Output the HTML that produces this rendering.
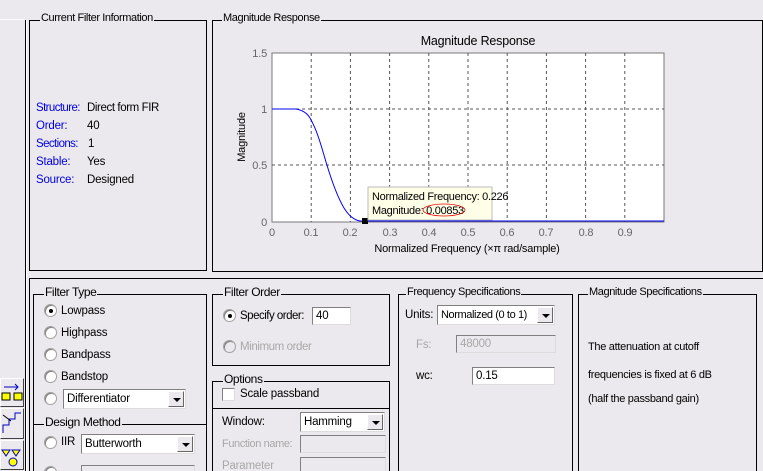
<!DOCTYPE html>
<html><head><meta charset="utf-8"><style>
*{margin:0;padding:0;box-sizing:border-box}
html,body{width:763px;height:471px;overflow:hidden}
body{background:#ebe9ed;font-family:"Liberation Sans",sans-serif;font-size:11px;color:#000;position:relative;letter-spacing:-0.2px}
.a{position:absolute}
.g{position:absolute;border:1px solid #000}
.t{position:absolute;background:#ebe9ed;padding:0 1px;font-size:11px;line-height:12px;white-space:nowrap;letter-spacing:-0.4px}
.rad{position:absolute;width:13px;height:13px;border-radius:50%;background:#fff;border:1px solid #a0a0a0;box-shadow:inset 1px 1px 0 #808080}
.rad.on::after{content:"";position:absolute;left:4px;top:4px;width:4px;height:4px;border-radius:50%;background:#000}
.rad.dis{background:#ebe9ed}
.lbl{position:absolute;font-size:11.5px;line-height:14px;white-space:nowrap}
.box{position:absolute;background:#fff;border:1px solid #808080;border-right-color:#ddd;border-bottom-color:#ddd;font-size:11.5px;line-height:16px;padding-left:3px;white-space:nowrap;overflow:hidden}
.dis{color:#a8a8a8}
.box.d{background:#ebe9ed}
.dd{position:absolute;right:1px;top:1px;bottom:1px;width:16px;background:#ebe9ed;border:1px solid #fff;border-right-color:#666;border-bottom-color:#666}
.dd::after{content:"";position:absolute;left:4px;top:6px;border-left:4px solid transparent;border-right:4px solid transparent;border-top:4px solid #000}
.blue{color:#0000e0}
.btn{position:absolute;left:0;width:24px;background:#ebe9ed;border:1px solid #fff;border-right-color:#404040;border-bottom-color:#404040}
</style></head><body>
<div class="a" style="left:0;top:19px;width:25px;height:1px;background:#fff"></div>
<div class="a" style="left:25px;top:20px;width:1px;height:451px;background:#000"></div>
<div class="a" style="left:26px;top:20px;width:1px;height:451px;background:#fff"></div>

<!-- Current filter info -->
<div class="g" style="left:29px;top:20px;width:178px;height:251px"></div>
<div class="t" style="left:40px;top:12px">Current Filter Information</div>
<div class="lbl blue" style="left:36px;top:101px;letter-spacing:-0.6px">Structure:</div><div class="lbl" style="left:87px;top:101px;letter-spacing:-0.4px">Direct form FIR</div>
<div class="lbl blue" style="left:36px;top:119px">Order:</div><div class="lbl" style="left:87px;top:119px">40</div>
<div class="lbl blue" style="left:36px;top:137px;letter-spacing:-0.6px">Sections:</div><div class="lbl" style="left:88px;top:137px">1</div>
<div class="lbl blue" style="left:36px;top:155px">Stable:</div><div class="lbl" style="left:87px;top:155px">Yes</div>
<div class="lbl blue" style="left:36px;top:173px">Source:</div><div class="lbl" style="left:87px;top:173px">Designed</div>

<!-- Magnitude response -->
<div class="g" style="left:212px;top:20px;width:551px;height:252px"></div>
<div class="t" style="left:222px;top:12px">Magnitude Response</div>
<svg class="a" style="left:213px;top:21px" width="549" height="250" viewBox="213 21 549 250">
<text x="478" y="45" font-family="Liberation Sans" font-size="12.5" text-anchor="middle">Magnitude Response</text>
<rect x="272" y="53" width="392" height="169" fill="#fff" stroke="#777"/>
<g stroke="#555" stroke-dasharray="3,3">
<line x1="311.2" y1="53" x2="311.2" y2="222"/><line x1="350.4" y1="53" x2="350.4" y2="222"/><line x1="389.6" y1="53" x2="389.6" y2="222"/><line x1="428.8" y1="53" x2="428.8" y2="222"/><line x1="468" y1="53" x2="468" y2="222"/><line x1="507.2" y1="53" x2="507.2" y2="222"/><line x1="546.4" y1="53" x2="546.4" y2="222"/><line x1="585.6" y1="53" x2="585.6" y2="222"/><line x1="624.8" y1="53" x2="624.8" y2="222"/>
<line x1="272" y1="109" x2="664" y2="109"/><line x1="272" y1="165" x2="664" y2="165"/>
</g>
<g font-family="Liberation Sans" font-size="11" fill="#666">
<text x="267" y="57" text-anchor="end">1.5</text><text x="267" y="113" text-anchor="end">1</text><text x="267" y="169" text-anchor="end">0.5</text><text x="267" y="226" text-anchor="end">0</text>
<text x="272" y="236" text-anchor="middle">0</text><text x="311" y="236" text-anchor="middle">0.1</text><text x="350" y="236" text-anchor="middle">0.2</text><text x="390" y="236" text-anchor="middle">0.3</text><text x="429" y="236" text-anchor="middle">0.4</text><text x="468" y="236" text-anchor="middle">0.5</text><text x="507" y="236" text-anchor="middle">0.6</text><text x="546" y="236" text-anchor="middle">0.7</text><text x="586" y="236" text-anchor="middle">0.8</text><text x="625" y="236" text-anchor="middle">0.9</text>
</g>
<text x="467" y="252" font-family="Liberation Sans" font-size="11" text-anchor="middle" letter-spacing="-0.2">Normalized Frequency  (×π rad/sample)</text>
<text transform="translate(245,137) rotate(-90)" font-family="Liberation Sans" font-size="11" text-anchor="middle">Magnitude</text>
<path d="M272 109 L296 109 C302 110 307 113 310 118 C317 130 321 145 326 162 C332 182 338 198 344 208 C349 216 354 220 360 221 L664 221" fill="none" stroke="#0000ff" stroke-width="1"/>
<rect x="362" y="218" width="6" height="6" fill="#000"/>
<rect x="368" y="187" width="124" height="33" fill="#ffffe8" stroke="#bbb"/>
<text x="372" y="200" font-family="Liberation Sans" font-size="11" letter-spacing="-0.3">Normalized Frequency: 0.226</text>
<text x="372" y="214" font-family="Liberation Sans" font-size="11" letter-spacing="-0.3">Magnitude: 0.00853</text>
<ellipse cx="444" cy="210" rx="21" ry="6" fill="none" stroke="#e00" stroke-width="0.8"/>
</svg>

<!-- Lower panel -->
<div class="g" style="left:29px;top:278px;width:740px;height:200px"></div>

<!-- Filter Type -->
<div class="g" style="left:33px;top:294px;width:174px;height:190px"></div>
<div class="t" style="left:44px;top:286px;font-size:12px">Filter Type</div>
<div class="rad on" style="left:44px;top:304px"></div><div class="lbl" style="left:61px;top:304px">Lowpass</div>
<div class="rad" style="left:44px;top:326px"></div><div class="lbl" style="left:61px;top:326px">Highpass</div>
<div class="rad" style="left:44px;top:348px"></div><div class="lbl" style="left:61px;top:348px">Bandpass</div>
<div class="rad" style="left:44px;top:370px"></div><div class="lbl" style="left:61px;top:370px">Bandstop</div>
<div class="rad" style="left:44px;top:392px"></div>
<div class="box" style="left:63px;top:389px;width:123px;height:20px;line-height:18px">Differentiator<div class="dd"></div></div>
<div class="a" style="left:33px;top:424px;width:174px;height:1px;background:#000"></div>
<div class="t" style="left:44px;top:416px;font-size:12px">Design Method</div>
<div class="rad" style="left:44px;top:436px"></div><div class="lbl" style="left:61px;top:435px">IIR</div>
<div class="box" style="left:81px;top:434px;width:114px;height:20px;line-height:18px">Butterworth<div class="dd"></div></div>
<div class="rad" style="left:44px;top:466px"></div>
<div class="box d" style="left:81px;top:465px;width:114px;height:20px"></div>

<!-- Filter Order -->
<div class="g" style="left:212px;top:294px;width:178px;height:72px"></div>
<div class="t" style="left:223px;top:286px;font-size:12px">Filter Order</div>
<div class="rad on" style="left:223px;top:309px"></div><div class="lbl" style="left:240px;top:309px;letter-spacing:-0.5px">Specify order:</div>
<div class="box" style="left:312px;top:307px;width:39px;height:18px">40</div>
<div class="rad dis" style="left:223px;top:340px"></div><div class="lbl dis" style="left:240px;top:340px;letter-spacing:-0.4px">Minimum order</div>

<!-- Options -->
<div class="g" style="left:212px;top:381px;width:178px;height:100px"></div>
<div class="a" style="left:212px;top:408px;width:178px;height:1px;background:#000"></div>
<div class="t" style="left:223px;top:373px;font-size:12px">Options</div>
<div class="a" style="left:222px;top:388px;width:13px;height:13px;background:#fff;border:1px solid #808080;border-right-color:#ddd;border-bottom-color:#ddd"></div>
<div class="lbl" style="left:240px;top:387px">Scale passband</div>
<div class="lbl" style="left:222px;top:415px">Window:</div>
<div class="box" style="left:300px;top:412px;width:85px;height:20px;line-height:18px">Hamming<div class="dd"></div></div>
<div class="lbl dis" style="left:222px;top:437px;font-size:11px;letter-spacing:-0.4px">Function name:</div>
<div class="box d" style="left:300px;top:435px;width:86px;height:18px"></div>
<div class="lbl dis" style="left:222px;top:459px">Parameter</div>
<div class="box d" style="left:300px;top:457px;width:86px;height:18px"></div>

<!-- Frequency Specifications -->
<div class="g" style="left:398px;top:294px;width:175px;height:190px"></div>
<div class="t" style="left:406px;top:286px">Frequency Specifications</div>
<div class="lbl" style="left:405px;top:308px">Units:</div>
<div class="box" style="left:437px;top:305px;width:118px;height:20px;line-height:18px;font-size:11px;letter-spacing:-0.4px">Normalized (0 to 1)<div class="dd"></div></div>
<div class="lbl dis" style="left:416px;top:338px">Fs:</div>
<div class="box d dis" style="left:456px;top:335px;width:100px;height:18px">48000</div>
<div class="lbl" style="left:416px;top:369px">wc:</div>
<div class="box" style="left:472px;top:367px;width:83px;height:18px">0.15</div>

<!-- Magnitude Specifications -->
<div class="g" style="left:578px;top:294px;width:179px;height:190px"></div>
<div class="t" style="left:588px;top:286px">Magnitude Specifications</div>
<div class="lbl" style="left:588px;top:340px;font-size:11px;letter-spacing:-0.3px">The attenuation at cutoff</div>
<div class="lbl" style="left:588px;top:368px;font-size:11px;letter-spacing:-0.3px">frequencies is fixed at 6 dB</div>
<div class="lbl" style="left:588px;top:392px;font-size:11px;letter-spacing:-0.3px">(half the passband gain)</div>

<!-- Toolbar buttons -->
<div class="btn" style="top:378px;height:29px"><svg width="22" height="27"><path d="M3 8h14M14 5l3 3-3 3" stroke="#0000c0" fill="none"/><rect x="1" y="14" width="8" height="7" fill="#ff0" stroke="#000"/><rect x="13" y="14" width="8" height="7" fill="#ff0" stroke="#000"/></svg></div>
<div class="btn" style="top:408px;height:31px"><svg width="22" height="29"><path d="M2 24v-8h6v-6h6v-6h6" stroke="#0000c0" fill="none"/><path d="M2 6l8 6" stroke="#000"/></svg></div>
<div class="btn" style="top:440px;height:30px"><svg width="22" height="28"><path d="M1 9h8l-4 6zM11 9h8l-4 6z" fill="#ff0" stroke="#0000c0"/><circle cx="12" cy="21" r="4" fill="#ff0" stroke="#0000c0"/></svg></div>
</body></html>
